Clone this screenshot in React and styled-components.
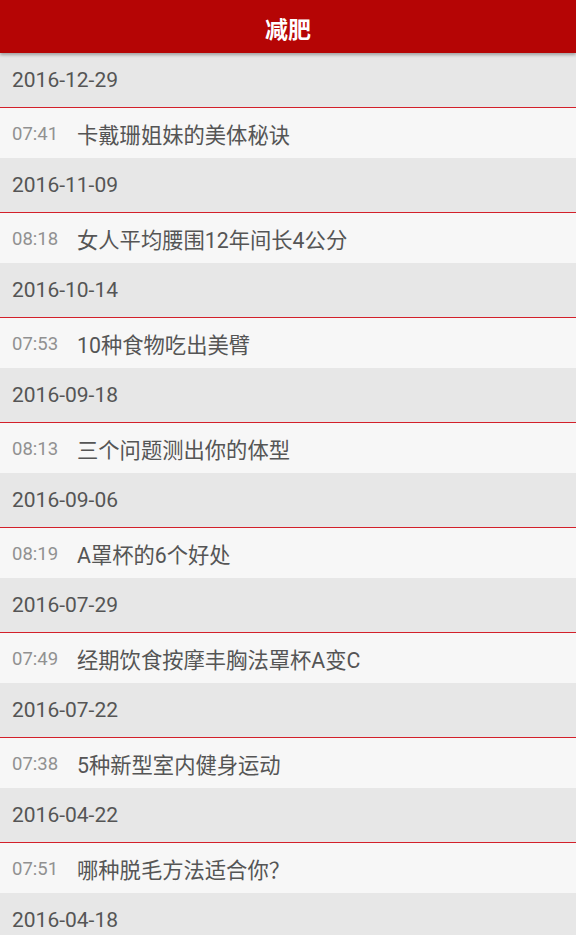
import styled, { createGlobalStyle } from 'styled-components';

const GlobalStyle = createGlobalStyle`
    html, body {
        margin: 0;
        padding: 0;
        background: #f7f7f7;
        font-family: Roboto, "Noto Sans CJK SC", sans-serif;
    }
`;

const entries = [
    { date: '2016-12-29', time: '07:41', title: '卡戴珊姐妹的美体秘诀' },
    { date: '2016-11-09', time: '08:18', title: '女人平均腰围12年间长4公分' },
    { date: '2016-10-14', time: '07:53', title: '10种食物吃出美臂' },
    { date: '2016-09-18', time: '08:13', title: '三个问题测出你的体型' },
    { date: '2016-09-06', time: '08:19', title: 'A罩杯的6个好处' },
    { date: '2016-07-29', time: '07:49', title: '经期饮食按摩丰胸法罩杯A变C' },
    { date: '2016-07-22', time: '07:38', title: '5种新型室内健身运动' },
    { date: '2016-04-22', time: '07:51', title: '哪种脱毛方法适合你？' },
    { date: '2016-04-18', time: '', title: '' },
];

export default function App() {
    return (
        <>
            <GlobalStyle />
            <StyledPage>
                <StyledHeader>减肥</StyledHeader>
                <StyledList>
                    {entries.map((entry) => (
                        <StyledGroup key={entry.date}>
                            <StyledDateRow>{entry.date}</StyledDateRow>
                            {entry.title && (
                                <StyledItemRow>
                                    <StyledTime>{entry.time}</StyledTime>
                                    <StyledTitle>{entry.title}</StyledTitle>
                                </StyledItemRow>
                            )}
                        </StyledGroup>
                    ))}
                </StyledList>
            </StyledPage>
        </>
    );
}

const StyledPage = styled.div`
    width: 576px;
    height: 935px;
    overflow: hidden;
    display: flex;
    flex-direction: column;
`;

const StyledHeader = styled.div`
    position: relative;
    z-index: 1;
    height: 53px;
    flex-shrink: 0;
    display: flex;
    align-items: center;
    justify-content: center;
    padding-top: 2px;
    box-sizing: border-box;
    background: #b50505;
    color: #ffffff;
    font-family: "Noto Sans CJK SC", sans-serif;
    font-weight: 700;
    font-size: 23px;
    box-shadow: 0 2px 3px rgba(0, 0, 0, 0.3);
`;

const StyledList = styled.div`
    display: flex;
    flex-direction: column;
`;

const StyledGroup = styled.div`
    display: flex;
    flex-direction: column;
`;

const StyledDateRow = styled.div`
    height: 54px;
    display: flex;
    align-items: center;
    padding-left: 12px;
    background: #e7e7e7;
    color: #555555;
    font-size: 21px;
    border-bottom: 1px solid #d3202a;
    box-sizing: content-box;
`;

const StyledItemRow = styled.div`
    height: 50px;
    display: flex;
    align-items: center;
    padding-left: 12px;
    padding-top: 1px;
    box-sizing: border-box;
    background: #f7f7f7;
`;

const StyledTime = styled.span`
    width: 65px;
    color: #919191;
    font-size: 18.5px;
`;

const StyledTitle = styled.span`
    color: #555555;
    font-size: 21.3px;
`;
